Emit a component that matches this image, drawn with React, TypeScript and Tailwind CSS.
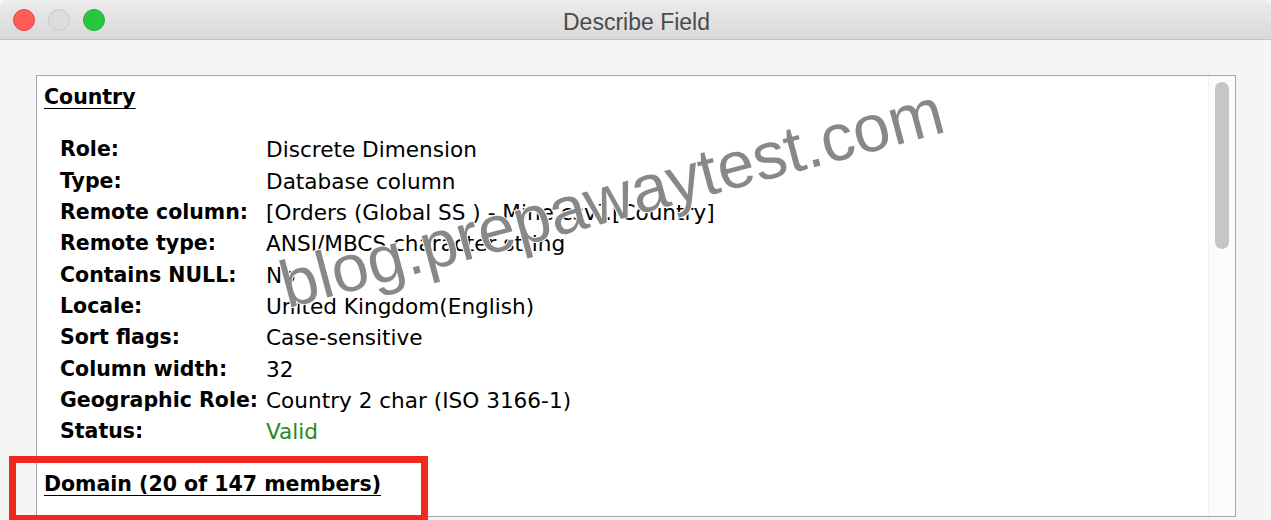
import React from "react";

type Row = { label: string; value: string; valueClass?: string };

const rows: Row[] = [
  { label: "Role:", value: "Discrete Dimension" },
  { label: "Type:", value: "Database column" },
  { label: "Remote column:", value: "[Orders (Global SS ) - Mine.csv].[Country]" },
  { label: "Remote type:", value: "ANSI/MBCS character string" },
  { label: "Contains NULL:", value: "No" },
  { label: "Locale:", value: "United Kingdom(English)" },
  { label: "Sort flags:", value: "Case-sensitive" },
  { label: "Column width:", value: "32" },
  { label: "Geographic Role:", value: "Country 2 char (ISO 3166-1)" },
  { label: "Status:", value: "Valid", valueClass: "text-[#1e8c1e]" },
];

function TrafficLights() {
  return (
    <div className="flex items-center gap-[13px] pl-[13px] pt-[1px]">
      <span className="block h-[22px] w-[22px] rounded-full bg-[#fd5d56] border border-[#e5463f]" />
      <span className="block h-[22px] w-[22px] rounded-full bg-[#dcdcdc] border border-[#c9c9c9]" />
      <span className="block h-[22px] w-[22px] rounded-full bg-[#29c63f] border border-[#1fae34]" />
    </div>
  );
}

export default function App() {
  return (
    <div className="relative h-[520px] w-[1271px] overflow-hidden bg-[#f5f5f5] font-['DejaVu_Sans',sans-serif] text-black">
      {/* title bar */}
      <div className="relative flex h-[40px] items-center rounded-t-[8px] border-b border-[#c4c4c4] bg-gradient-to-b from-[#ececec] to-[#d9d9d9]">
        <TrafficLights />
        <div className="absolute inset-0 flex items-center justify-center pt-[5px] pl-[2px] font-['Liberation_Sans',sans-serif] text-[23px] text-[#4b4b4b]">
          Describe Field
        </div>
      </div>

      {/* content panel */}
      <div className="ml-[36px] mt-[35px] flex h-[442px] w-[1200px] border border-[#a8a8a8] bg-white">
        <div className="flex-1 pl-[7px] pt-[6px] leading-[31.33px]">
          <div className="text-[20.5px] font-bold underline decoration-1 underline-offset-[4px]">Country</div>
          <div className="mt-[21px] pl-[16px]">
            {rows.map((r) => (
              <div key={r.label} className="flex">
                <div className="w-[206px] shrink-0 text-[20.5px] font-bold">{r.label}</div>
                <div className={`text-[21.6px] ${r.valueClass ?? "text-black"}`}>{r.value}</div>
              </div>
            ))}
          </div>
          <div className="mt-[21px] text-[20.5px] font-bold underline decoration-1 underline-offset-[4px]">
            Domain (20 of 147 members)
          </div>
        </div>
        {/* vertical scrollbar */}
        <div className="flex w-[27px] shrink-0 justify-center border-l border-[#f1f1f1] bg-[#fbfbfb] pt-[6px]">
          <div className="h-[167px] w-[14px] rounded-full bg-[#c6c6c6]" />
        </div>
      </div>

      {/* annotation frame */}
      <div className="absolute left-[9px] top-[456px] h-[66px] w-[419px] border-[7px] border-[#f0281d]" />

      {/* watermark */}
      <div className="pointer-events-none absolute left-[290px] top-[252px] origin-bottom-left -rotate-[15deg] whitespace-nowrap font-['Liberation_Sans',sans-serif] text-[66.5px] leading-none text-[#888888] [-webkit-text-stroke:2px_white] [paint-order:stroke_fill]">
        blog.prepawaytest.com
      </div>
    </div>
  );
}
